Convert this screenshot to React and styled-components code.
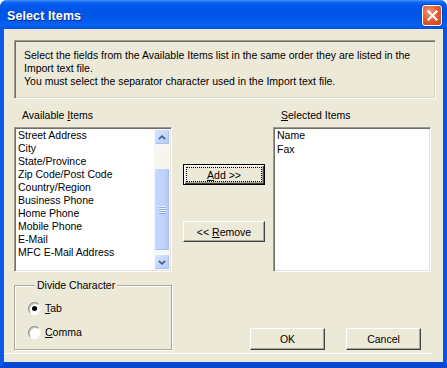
import React from 'react';
import styled, { createGlobalStyle, css } from 'styled-components';

const GlobalStyle = createGlobalStyle`
  html, body { margin: 0; padding: 0; background: #fff; }
  body { font-family: "Liberation Sans", Arial, sans-serif; }
  * { box-sizing: border-box; }
`;

const FONT = `"Liberation Sans", Arial, sans-serif`;

const Window = styled.div`
  width: 447px;
  height: 368px;
  display: flex;
  flex-direction: column;
  border-radius: 7px 7px 0 0;
  overflow: hidden;
  background: #0b57e4;
`;

const TitleBar = styled.div`
  height: 29px;
  flex: none;
  display: flex;
  align-items: center;
  justify-content: space-between;
  padding: 2px 5px 0 7px;
  background: linear-gradient(
    to bottom,
    #4a96fb 0px,
    #1469f0 2px,
    #0058ee 5px,
    #0054e6 12px,
    #0059ec 20px,
    #0862f4 25px,
    #0052e0 29px
  );
`;

const Title = styled.span`
  font: bold 12.5px ${FONT};
  color: #fff;
  text-shadow: 1px 1px #0c2b8a;
  letter-spacing: 0.1px;
`;

const CloseButton = styled.div`
  width: 20px;
  height: 21px;
  border: 1px solid #fff;
  border-radius: 3px;
  background: radial-gradient(circle at 35% 30%, #f29a7c 0%, #e35d36 45%, #cf4420 100%);
  display: flex;
  align-items: center;
  justify-content: center;
  box-shadow: 0 0 0 1px rgba(0, 40, 150, 0.35);
`;

const Body = styled.div`
  flex: 1;
  display: flex;
  flex-direction: column;
  background: #ece9d8;
  border-left: 4px solid #0b5ae8;
  border-right: 4px solid #0a55e0;
  border-bottom: 6px solid #0847cf;
  padding: 11px 7px 0 10px;
`;

const InfoBox = styled.div`
  height: 59px;
  flex: none;
  border: 1px solid;
  border-color: #9d9a8c #ffffff #ffffff #9d9a8c;
  box-shadow: inset 1px 1px #716f64, inset -1px -1px #d8d5c6;
  padding: 8px 8px 0 9px;
  font: 10.5px/13px ${FONT};
  color: #000;
  white-space: nowrap;
`;

const Main = styled.div`
  display: grid;
  grid-template-columns: 158px 101px 158px;
  grid-template-rows: 13px 145px;
  row-gap: 5px;
  margin-top: 10px;
`;

const Label = styled.div`
  padding-left: 8px;
  font: 10.5px/13px ${FONT};
  color: #000;
`;

const ListBox = styled.div`
  height: 145px;
  background: #fff;
  border: 1px solid;
  border-color: #9d9a8c #ffffff #ffffff #9d9a8c;
  box-shadow: inset 1px 1px #716f64, inset -1px -1px #e6e3d6;
  padding: 1px;
  display: flex;
  overflow: hidden;
`;

const Items = styled.div`
  flex: 1;
  padding: 0 2px;
  display: flex;
  flex-direction: column;
`;

const Item = styled.div`
  font: 10.5px/13px ${FONT};
  color: #000;
  white-space: nowrap;
  height: ${(p) => p.$h || 13}px;
`;

const ScrollBar = styled.div`
  width: 16px;
  flex: none;
  display: flex;
  flex-direction: column;
  background: #f6f5f0;
`;

const ScrollBtn = styled.div`
  width: 16px;
  height: 16px;
  flex: none;
  border: 1px solid #f4f7ff;
  border-radius: 2px;
  background: linear-gradient(135deg, #dbe6fe 0%, #c2d3fc 60%, #b3c8f8 100%);
  display: flex;
  align-items: center;
  justify-content: center;
  box-shadow: inset -1px -1px #a8bff4;
`;

const Track = styled.div`
  flex: 1;
  display: flex;
  flex-direction: column;
  padding: ${(p) => p.$before}px 0 ${(p) => p.$after}px;
`;

const Thumb = styled.div`
  flex: 1;
  border: 1px solid #f4f7ff;
  border-radius: 2px;
  background: linear-gradient(90deg, #c9d8fd 0%, #c0d1fc 60%, #b3c7f7 100%);
  box-shadow: inset -1px -1px #a6bdf2;
  display: flex;
  flex-direction: column;
  align-items: center;
  justify-content: center;
  gap: 1px;
`;

const Grip = styled.span`
  width: 7px;
  height: 1px;
  background: #eef3ff;
  box-shadow: 0 1px #8fa9e6;
`;

const Middle = styled.div`
  display: flex;
  flex-direction: column;
  align-items: flex-start;
  padding: 37px 0 0 11px;
  gap: 36px;
`;

const Button = styled.button`
  width: ${(p) => p.$w}px;
  height: ${(p) => p.$h || 21}px;
  padding: 0;
  background: #ece9d8;
  border: 1px solid;
  border-color: #ffffff #404040 #404040 #ffffff;
  box-shadow: inset -1px -1px #aca899;
  font: 10.5px ${FONT};
  color: #000;
  display: flex;
  align-items: center;
  justify-content: center;
  ${(p) =>
    p.$default &&
    css`
      border: 1px solid #000;
      box-shadow: inset 1px 1px #fff, inset -1px -1px #404040, inset -2px -2px #aca899;
      padding: 2px;
    `}
`;

const ButtonText = styled.span`
  white-space: pre;
`;

const FocusRing = styled.span`
  flex: 1;
  align-self: stretch;
  display: flex;
  align-items: center;
  justify-content: center;
  border: 1px dotted #000;
  white-space: pre;
`;

const BottomRow = styled.div`
  display: flex;
  align-items: flex-end;
  margin-top: 7px;
`;

const GroupBox = styled.fieldset`
  width: 158px;
  height: 71px;
  margin: 0;
  padding: 9px 0 0 13px;
  border: 1px solid #aca899;
  box-shadow: inset 1px 1px #fff, 1px 1px #fff;
  display: flex;
  flex-direction: column;
  gap: 10px;
  min-width: 0;
`;

const Legend = styled.legend`
  margin-left: 7px;
  padding: 0 2px;
  background: #ece9d8;
  font: 10.5px/13px ${FONT};
  color: #000;
`;

const RadioRow = styled.label`
  display: flex;
  align-items: center;
  gap: 4px;
  height: 14px;
  font: 10.5px/13px ${FONT};
  color: #000;
`;

const RadioCircle = styled.span`
  width: 13px;
  height: 13px;
  border-radius: 50%;
  background: radial-gradient(circle at 60% 60%, #ffffff 0%, #ffffff 55%, #f1efe6 100%);
  border: 1px solid;
  border-color: #8c8a80 #f4f3ee #ffffff #8c8a80;
  box-shadow: inset 1px 1px #c9c6b8;
  display: flex;
  align-items: center;
  justify-content: center;
  &::after {
    content: "";
    width: 5px;
    height: 5px;
    border-radius: 50%;
    background: ${(p) => (p.$checked ? '#000' : 'transparent')};
  }
`;

const Actions = styled.div`
  display: flex;
  gap: 21px;
  margin-left: 78px;
`;

const Separator = styled.div`
  height: 1px;
  background: #fdfdfb;
  margin: 3px 4px 0 -10px;
`;

const ArrowUp = () => (
  <svg width="8" height="5" viewBox="0 0 8 5">
    <polyline points="0.8,4.2 4,1.2 7.2,4.2" fill="none" stroke="#4d6185" strokeWidth="1.8" />
  </svg>
);

const ArrowDown = () => (
  <svg width="8" height="5" viewBox="0 0 8 5">
    <polyline points="0.8,0.8 4,3.8 7.2,0.8" fill="none" stroke="#4d6185" strokeWidth="1.8" />
  </svg>
);

const available = [
  'Street Address',
  'City',
  'State/Province',
  'Zip Code/Post Code',
  'Country/Region',
  'Business Phone',
  'Home Phone',
  'Mobile Phone',
  'E-Mail',
  'MFC E-Mail Address',
];

const selected = ['Name', 'Fax'];

export default function App() {
  return (
    <>
      <GlobalStyle />
      <Window>
        <TitleBar>
          <Title>Select Items</Title>
          <CloseButton>
            <svg width="11" height="11" viewBox="0 0 11 11">
              <path d="M1.5 1.5 L9.5 9.5 M9.5 1.5 L1.5 9.5" stroke="#fff" strokeWidth="2.2" strokeLinecap="square" />
            </svg>
          </CloseButton>
        </TitleBar>
        <Body>
          <InfoBox>
            Select the fields from the Available Items list in the same order they are listed in the
            <br />
            Import text file.
            <br />
            You must select the separator character used in the Import text file.
          </InfoBox>
          <Main>
            <Label>
              Available <u>I</u>tems
            </Label>
            <div />
            <Label>
              <u>S</u>elected Items
            </Label>
            <ListBox>
              <Items>
                {available.map((t) => (
                  <Item key={t}>{t}</Item>
                ))}
              </Items>
              <ScrollBar>
                <ScrollBtn>
                  <ArrowUp />
                </ScrollBtn>
                <Track $before={23} $after={3}>
                  <Thumb>
                    <Grip />
                    <Grip />
                    <Grip />
                    <Grip />
                  </Thumb>
                </Track>
                <ScrollBtn>
                  <ArrowDown />
                </ScrollBtn>
              </ScrollBar>
            </ListBox>
            <Middle>
              <Button $w={82} $default>
                <FocusRing>
                  <u>A</u>{'dd >>'}
                </FocusRing>
              </Button>
              <Button $w={82}>
                <ButtonText>
                  {'<< '}
                  <u>R</u>emove
                </ButtonText>
              </Button>
            </Middle>
            <ListBox>
              <Items>
                {selected.map((t) => (
                  <Item key={t} $h={14}>
                    {t}
                  </Item>
                ))}
              </Items>
            </ListBox>
          </Main>
          <BottomRow>
            <GroupBox>
              <Legend>Divide Character</Legend>
              <RadioRow>
                <RadioCircle $checked />
                <span>
                  <u>T</u>ab
                </span>
              </RadioRow>
              <RadioRow>
                <RadioCircle />
                <span>
                  <u>C</u>omma
                </span>
              </RadioRow>
            </GroupBox>
            <Actions>
              <Button $w={75} $h={22}>
                <ButtonText>OK</ButtonText>
              </Button>
              <Button $w={75} $h={22}>
                <ButtonText>Cancel</ButtonText>
              </Button>
            </Actions>
          </BottomRow>
          <Separator />
        </Body>
      </Window>
    </>
  );
}
